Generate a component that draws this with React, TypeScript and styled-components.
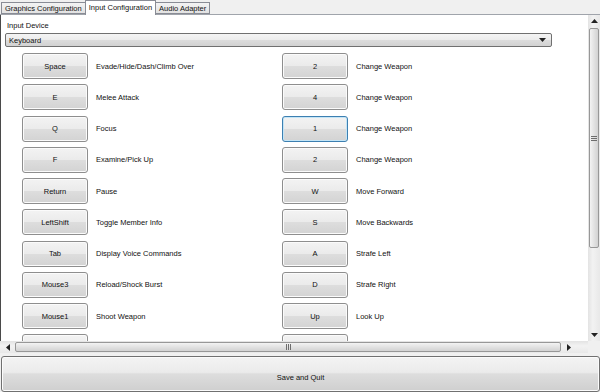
import React from "react";
import styled, { createGlobalStyle } from "styled-components";

const GlobalStyle = createGlobalStyle`
  body {
    margin: 0;
    font-family: "Liberation Sans", Arial, sans-serif;
    font-size: 7.5px;
    color: #111;
    -webkit-font-smoothing: antialiased;
  }
`;

const Frame = styled.div`
  width: 600px;
  height: 392px;
  display: flex;
  flex-direction: column;
  background: #f0f0f0;
  overflow: hidden;
`;

const TabStrip = styled.div`
  display: flex;
  align-items: flex-end;
  height: 15px;
  padding-left: 2px;
  box-sizing: border-box;
  border-bottom: 1px solid #a0a4ab;
`;

const Tab = styled.div<{ active?: boolean }>`
  height: ${(p) => (p.active ? "15px" : "12px")};
  margin-bottom: ${(p) => (p.active ? "-1px" : "0")};
  padding: 0 3px;
  margin-left: -1px;
  box-sizing: border-box;
  display: flex;
  align-items: center;
  border: 1px solid #898c95;
  border-bottom: ${(p) => (p.active ? "none" : "1px solid #898c95")};
  background: ${(p) =>
    p.active ? "#fff" : "linear-gradient(#f3f3f3, #e2e2e2)"};
  padding-bottom: ${(p) => (p.active ? "2px" : "0")};
  position: relative;
  z-index: ${(p) => (p.active ? 1 : 0)};
`;

const Body = styled.div`
  display: flex;
  height: 326px;
`;

const Panel = styled.div`
  flex: 1;
  background: #fff;
  border-left: 1px solid #4a4a4a;
  padding: 6px 0 0 4px;
  overflow: hidden;
`;

const FieldLabel = styled.div`
  height: 9px;
  line-height: 9px;
  padding-left: 2px;
  margin-bottom: 3px;
`;

const Dropdown = styled.div`
  width: 547px;
  height: 14px;
  box-sizing: border-box;
  border: 1px solid #707070;
  border-radius: 2px;
  background: linear-gradient(#f4f4f4 0%, #ececec 48%, #dcdcdc 52%, #d2d2d2 100%);
  display: flex;
  align-items: center;
  justify-content: space-between;
  padding: 0 5px 0 3px;
`;

const Grid = styled.div`
  margin: 6px 0 0 17px;
  display: grid;
  grid-template-columns: 260px 260px;
  row-gap: 5.25px;
`;

const Binding = styled.div`
  display: flex;
  align-items: center;
  gap: 8px;
`;

const KeyButton = styled.div<{ focused?: boolean }>`
  width: 66px;
  height: 26px;
  box-sizing: border-box;
  border: 1px solid ${(p) => (p.focused ? "#3c7fb1" : "#8e8e8e")};
  border-radius: 3px;
  box-shadow: inset 0 0 0 1px ${(p) => (p.focused ? "#c4e5f6" : "#fbfbfb")};
  background: linear-gradient(#f3f3f3 0%, #ebebeb 48%, #dddddd 52%, #d3d3d3 100%);
  display: flex;
  align-items: center;
  justify-content: center;
`;

const ActionText = styled.span`
  white-space: nowrap;
`;

const VScroll = styled.div`
  width: 12px;
  display: flex;
  flex-direction: column;
  background: linear-gradient(90deg, #e3e3e3, #f2f2f2 40%, #e8e8e8);
`;

const ArrowCell = styled.div<{ w?: number }>`
  width: ${(p) => (p.w ? `${p.w}px` : "12px")};
  height: 12px;
  flex: none;
  display: flex;
  align-items: center;
  justify-content: center;
`;

const Track = styled.div`
  flex: 1;
  display: flex;
  flex-direction: column;
`;

const VThumb = styled.div`
  margin: 1px 0 0 1px;
  width: 10px;
  height: 220px;
  box-sizing: border-box;
  border: 1px solid #979797;
  border-radius: 2px;
  background: linear-gradient(90deg, #f3f3f3, #e2e2e2 50%, #d2d2d2);
  display: flex;
  align-items: center;
  justify-content: center;
`;

const HScroll = styled.div`
  height: 12px;
  display: flex;
  background: linear-gradient(#e3e3e3, #f2f2f2 40%, #e8e8e8);
`;

const HThumb = styled.div`
  width: 546px;
  height: 10px;
  margin-top: 1px;
  box-sizing: border-box;
  border: 1px solid #979797;
  border-radius: 2px;
  background: linear-gradient(#f3f3f3, #e2e2e2 50%, #d2d2d2);
  display: flex;
  align-items: center;
  justify-content: center;
`;

const Corner = styled.div`
  width: 12px;
  margin-left: auto;
  background: #f0f0f0;
`;

const SaveButton = styled.div`
  flex: 1;
  margin: 3px 0 0 1px;
  padding-top: 6px;
  border: 1px solid #707070;
  border-radius: 3px;
  box-shadow: inset 0 0 0 1px #fbfbfb;
  background: linear-gradient(#f3f3f3 0%, #ebebeb 45%, #dddddd 50%, #cfcfcf 100%);
  display: flex;
  align-items: center;
  justify-content: center;
`;

const Arrow = ({ dir }: { dir: "up" | "down" | "left" | "right" }) => {
  const pts = {
    up: "0,4 3.5,0 7,4",
    down: "0,0 7,0 3.5,4",
    left: "4,0 4,7 0,3.5",
    right: "0,0 4,3.5 0,7",
  }[dir];
  const vertical = dir === "up" || dir === "down";
  return (
    <svg width={vertical ? 7 : 4} height={vertical ? 4 : 7}>
      <polygon points={pts} fill="#222" />
    </svg>
  );
};

const Grip = ({ vertical }: { vertical?: boolean }) => (
  <svg width={vertical ? 6 : 5} height={vertical ? 5 : 6}>
    {[0, 2, 4].map((o) =>
      vertical ? (
        <rect key={o} x={0} y={o} width={6} height={1} fill="#6d6d6d" />
      ) : (
        <rect key={o} x={o} y={0} width={1} height={6} fill="#6d6d6d" />
      )
    )}
  </svg>
);

const left = [
  ["Space", "Evade/Hide/Dash/Climb Over"],
  ["E", "Melee Attack"],
  ["Q", "Focus"],
  ["F", "Examine/Pick Up"],
  ["Return", "Pause"],
  ["LeftShift", "Toggle Member Info"],
  ["Tab", "Display Voice Commands"],
  ["Mouse3", "Reload/Shock Burst"],
  ["Mouse1", "Shoot Weapon"],
  ["", ""],
];

const right = [
  ["2", "Change Weapon"],
  ["4", "Change Weapon"],
  ["1", "Change Weapon"],
  ["2", "Change Weapon"],
  ["W", "Move Forward"],
  ["S", "Move Backwards"],
  ["A", "Strafe Left"],
  ["D", "Strafe Right"],
  ["Up", "Look Up"],
  ["", ""],
];

export default function App() {
  return (
    <Frame>
      <GlobalStyle />
      <TabStrip>
        <Tab>Graphics Configuration</Tab>
        <Tab active>Input Configuration</Tab>
        <Tab>Audio Adapter</Tab>
      </TabStrip>
      <Body>
        <Panel>
          <FieldLabel>Input Device</FieldLabel>
          <Dropdown>
            <span>Keyboard</span>
            <Arrow dir="down" />
          </Dropdown>
          <Grid>
            {left.map((l, i) => (
              <React.Fragment key={i}>
                <Binding>
                  <KeyButton>{l[0]}</KeyButton>
                  <ActionText>{l[1]}</ActionText>
                </Binding>
                <Binding>
                  <KeyButton focused={i === 2}>{right[i][0]}</KeyButton>
                  <ActionText>{right[i][1]}</ActionText>
                </Binding>
              </React.Fragment>
            ))}
          </Grid>
        </Panel>
        <VScroll>
          <ArrowCell>
            <Arrow dir="up" />
          </ArrowCell>
          <Track>
            <VThumb>
              <Grip vertical />
            </VThumb>
          </Track>
          <ArrowCell>
            <Arrow dir="down" />
          </ArrowCell>
        </VScroll>
      </Body>
      <HScroll>
        <ArrowCell w={15}>
          <Arrow dir="left" />
        </ArrowCell>
        <HThumb>
          <Grip />
        </HThumb>
        <ArrowCell w={15}>
          <Arrow dir="right" />
        </ArrowCell>
        <Corner />
      </HScroll>
      <SaveButton>Save and Quit</SaveButton>
    </Frame>
  );
}
